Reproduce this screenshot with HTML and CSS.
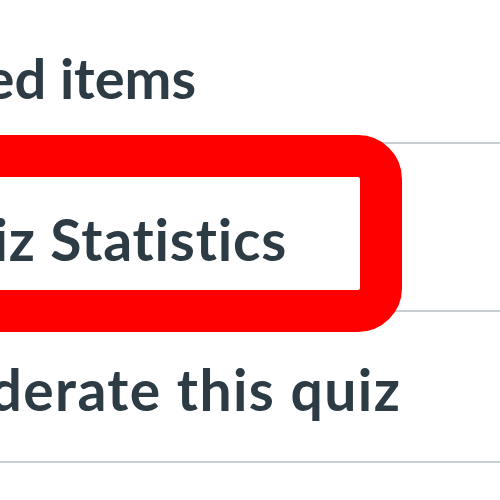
FILE: index.html
```html
<!DOCTYPE html>
<html lang="en">
<head>
<meta charset="utf-8">
<title>Related items</title>
<link rel="stylesheet" href="styles.css">
</head>
<body>
<div class="sidebar">
  <h2 class="heading">Related items</h2>
  <ul class="links">
    <li class="link-row link-row--stats"><a class="link" href="#">Quiz Statistics</a></li>
    <li class="link-row link-row--moderate"><a class="link" href="#">Moderate this quiz</a></li>
  </ul>
  <div class="highlight" aria-hidden="true"></div>
</div>
</body>
</html>
```

FILE: styles.css
```css
html, body {
  margin: 0;
  padding: 0;
  background: #ffffff;
}

.sidebar {
  position: relative;
  width: 500px;
  height: 500px;
  overflow: hidden;
  font-family: "Lato", "Liberation Sans", sans-serif;
  color: #2d3b45;
  font-variant-ligatures: none;
}

.heading {
  margin: 0 0 0 -142px;
  height: 144px;
  box-sizing: border-box;
  padding-top: 42px;
  font-size: 56px;
  font-weight: 700;
  line-height: 72px;
  white-space: nowrap;
  border-bottom: 2px solid #c7cdd1;
}

.links {
  list-style: none;
  margin: 0;
  padding: 0;
}

.link-row {
  box-sizing: border-box;
  border-bottom: 2px solid #c7cdd1;
}

.link-row--stats {
  height: 168px;
  padding-top: 59px;
}

.link-row--moderate {
  height: 151px;
  padding-top: 41px;
}

.link {
  display: block;
  margin-left: -86px;
  font-size: 57px;
  font-weight: 700;
  line-height: 72px;
  letter-spacing: 0.8px;
  color: #2d3b45;
  text-decoration: none;
  white-space: nowrap;
}

.link-row--moderate .link {
  margin-left: -99px;
  letter-spacing: 1.4px;
}

.highlight {
  position: absolute;
  left: -60px;
  top: 135px;
  width: 462px;
  height: 197px;
  box-sizing: border-box;
  border: 42px solid #ff0000;
  border-radius: 44px;
}
```
